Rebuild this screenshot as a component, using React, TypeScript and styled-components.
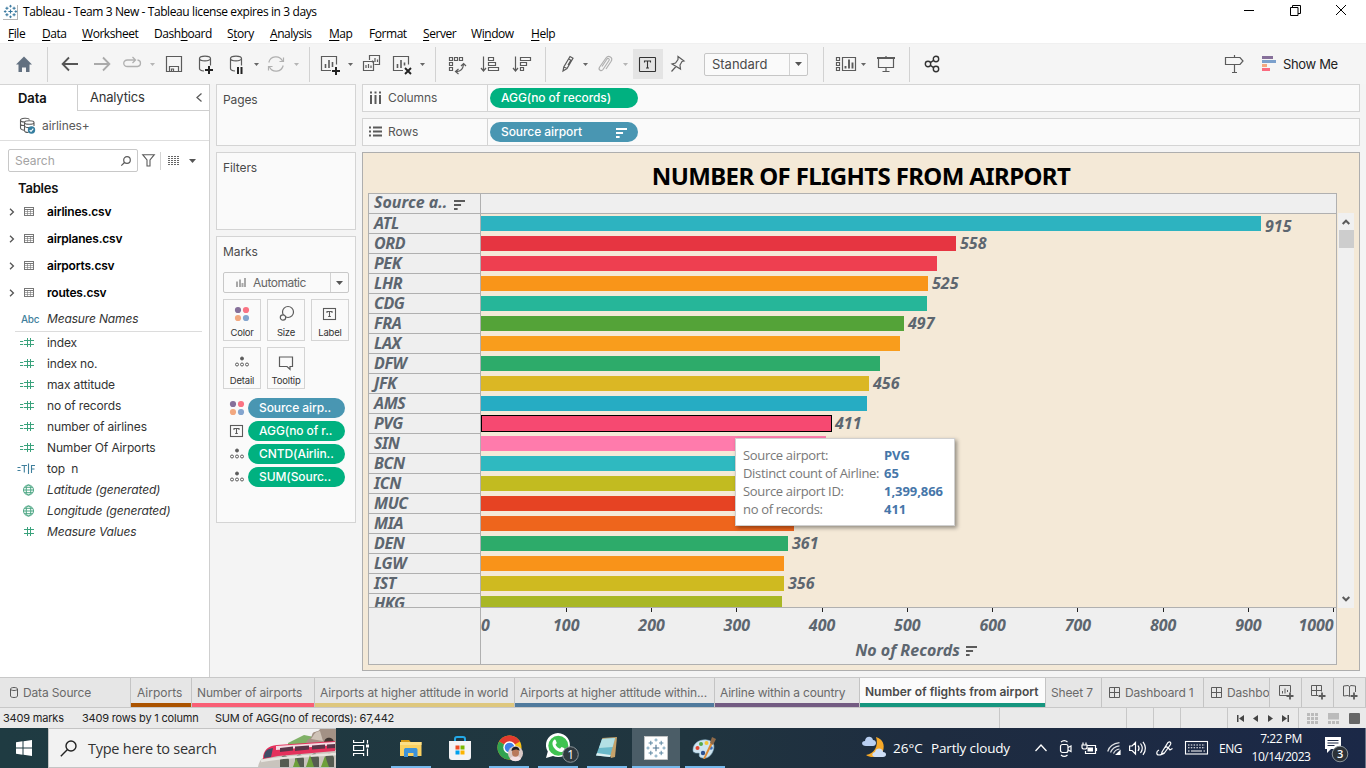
import React from "react";
import styled, { createGlobalStyle, css } from "styled-components";

const ui = `Inter, "Open Sans", sans-serif`;
const win = `"Open Sans", "Noto Sans", sans-serif`;
const noto = `"Noto Sans", "Open Sans", sans-serif`;

const GlobalStyle = createGlobalStyle`
  * { box-sizing: border-box; }
  html, body { margin: 0; padding: 0; }
  body { width: 1366px; height: 768px; overflow: hidden; font-family: ${ui}; }
  svg { display: block; flex: none; overflow: visible; }
`;

const Screen = styled.div`
  width: 1366px;
  height: 768px;
  display: flex;
  flex-direction: column;
  background: #f4f4f4;
  overflow: hidden;
  white-space: pre;
`;

/* ---------- title bar and menu ---------- */
const TitleBar = styled.header`
  height: 24px;
  flex: none;
  background: #fff;
  display: flex;
  align-items: center;
  padding: 0 2px 0 3px;
  font: 12px/24px ${win};
  color: #000;
`;
const AppIcon = styled.span`
  width: 15px;
  height: 15px;
  margin-right: 5px;
  display: grid;
  place-items: center;
  border-right: 1px solid #b5b5b5;
  border-bottom: 1px solid #b5b5b5;
`;
const WindowTitle = styled.span`
  letter-spacing: -0.4px;
  flex: 1;
`;
const WindowButton = styled.span`
  width: 46px;
  height: 20px;
  margin-bottom: 4px;
  display: grid;
  place-items: center;
`;
const MenuBar = styled.nav`
  height: 19px;
  flex: none;
  background: #fff;
  display: flex;
  font: 12px/20px ${win};
  color: #000;
`;
const MenuItem = styled.span<{ $w: number }>`
  width: ${(p) => p.$w}px;
  letter-spacing: -0.45px;
  u { text-underline-offset: 2px; }
`;

/* ---------- toolbar ---------- */
const ToolBar = styled.div`
  height: 41px;
  flex: none;
  background: #f5f5f5;
  border-top: 1px solid #f0f0f0;
  display: flex;
  align-items: center;
`;
const Tool = styled.span<{ $ml: number }>`
  margin-left: ${(p) => p.$ml}px;
  flex: none;
`;
const ToolDivider = styled.span<{ $ml: number }>`
  width: 1px;
  height: 35px;
  background: #d2d2d2;
  margin-left: ${(p) => p.$ml}px;
  flex: none;
`;
const LabelToggle = styled.span`
  width: 30px;
  height: 30px;
  margin-left: 4px;
  padding-right: 1px;
  background: #e4e4e4;
  display: grid;
  place-items: center;
`;
const FitSelect = styled.span`
  width: 104px;
  height: 23px;
  margin-left: 17px;
  border: 1px solid #c6c6c6;
  border-radius: 2px;
  background: #fafafa;
  display: flex;
  align-items: center;
  font-size: 13px;
  color: #4a4a4a;
  padding-left: 7px;
  letter-spacing: -0.02px;
`;
const SelectArrow = styled.span<{ $w: number }>`
  width: ${(p) => p.$w}px;
  height: 100%;
  margin-left: auto;
  border-left: 1px solid #d2d2d2;
  display: grid;
  place-items: center;
`;
const ShowMe = styled.span`
  margin-left: 17px;
  display: flex;
  align-items: center;
  gap: 6px;
  width: 103px;
  font-size: 13px;
  letter-spacing: -0.35px;
  line-height: 18px;
  padding-bottom: 1px;
  color: #222;
`;

/* ---------- workspace ---------- */
const Workspace = styled.main`
  height: 593px;
  flex: none;
  display: flex;
`;
const DataPane = styled.aside`
  width: 210px;
  flex: none;
  background: #fff;
  border-right: 1px solid #cfcfcf;
  display: flex;
  flex-direction: column;
`;
const PaneTabs = styled.div`
  height: 27px;
  display: flex;
  flex: none;
  border-top: 1px solid #d4d4d4;
`;
const PaneTab = styled.span<{ $active?: boolean }>`
  display: flex;
  align-items: center;
  font-size: 13px;
  color: #111;
  ${(p) =>
    p.$active
      ? css`
          width: 77px;
          padding: 0 0 1px 18px;
          font-weight: 600;
          letter-spacing: -0.1px;
        `
      : css`
          flex: 1;
          padding: 0 7px 1px 12px;
          justify-content: space-between;
          border-left: 1px solid #cfcfcf;
          border-bottom: 1px solid #cfcfcf;
          letter-spacing: -0.2px;
          color: #333;
        `}
`;
const SourceRow = styled.div`
  height: 30px;
  flex: none;
  border-bottom: 1px solid #dedede;
  display: flex;
  align-items: center;
  padding: 0 0 1px 19px;
  gap: 6px;
  font-size: 12px;
  letter-spacing: -0.1px;
  color: #5a5a5a;
`;
const SearchRow = styled.div`
  height: 23px;
  flex: none;
  margin: 8px 0 5px 8px;
  display: flex;
  align-items: center;
`;
const SearchField = styled.span`
  width: 130px;
  height: 23px;
  border: 1px solid #c8c8c8;
  border-radius: 2px;
  display: flex;
  align-items: center;
  justify-content: space-between;
  padding: 0 6px;
  font-size: 12px;
  color: #a3a3a3;
`;
const ViewSplit = styled.span`
  width: 1px;
  height: 18px;
  background: #d4d4d4;
  margin: 0 7px 0 5px;
`;
const TablesHeading = styled.div`
  height: 21px;
  line-height: 22px;
  padding-left: 18px;
  font-size: 13px;
  font-weight: 600;
  letter-spacing: -0.2px;
  color: #111;
`;
const TableRow = styled.div`
  height: 27px;
  display: flex;
  align-items: center;
  padding-left: 9px;
  font-size: 12px;
  font-weight: 600;
  letter-spacing: -0.2px;
  color: #000;
  svg:nth-child(2) { margin: 0 13px 0 9px; }
`;
const FieldRow = styled.div<{ $names?: boolean; $italic?: boolean }>`
  height: ${(p) => (p.$names ? 26 : 21)}px;
  margin: 0 7px 0 15px;
  border-bottom: ${(p) => (p.$names ? "1px solid #dcdcdc" : "0")};
  display: flex;
  align-items: center;
  font-size: 12px;
  color: #333;
  font-style: ${(p) => (p.$italic ? "italic" : "normal")};
`;
const FieldIcon = styled.span<{ $abc?: boolean }>`
  width: 32px;
  display: flex;
  padding-left: ${(p) => (p.$abc ? 6 : 0)}px;
  font: 500 10px ${ui};
  letter-spacing: -0.3px;
  color: #3f7f9c;
`;
const FieldName = styled.span`
  letter-spacing: -0.15px;
`;

/* ---------- cards ---------- */
const Cards = styled.section`
  width: 140px;
  margin-left: 6px;
  flex: none;
  display: flex;
  flex-direction: column;
  gap: 6px;
`;
const Card = styled.div<{ $h: number }>`
  height: ${(p) => p.$h}px;
  border: 1px solid #d4d4d4;
  background: #fafafa;
  padding: 7px 6px 0;
  color: #4a4a4a;
  font-size: 12px;
`;
const CardTitle = styled.div`
  line-height: 16px;
  letter-spacing: -0.1px;
`;
const MarkSelect = styled.div`
  margin-top: 12px;
  width: 126px;
  height: 21px;
  border: 1px solid #c8c8c8;
  border-radius: 2px;
  display: flex;
  align-items: center;
  padding-left: 12px;
  gap: 7px;
  color: #666;
  letter-spacing: -0.5px;
`;
const MarkGrid = styled.div`
  margin-top: 6px;
  display: grid;
  grid-template-columns: repeat(3, 38px);
  grid-auto-rows: 42px;
  gap: 6px;
`;
const MarkButton = styled.div`
  border: 1px solid #d4d4d4;
  display: flex;
  flex-direction: column;
  align-items: center;
  justify-content: space-between;
  padding: 4px 0 0;
  font-size: 9.5px;
  line-height: 14px;
  letter-spacing: -0.2px;
  color: #333;
`;
const PillList = styled.div`
  margin-top: 9px;
  display: flex;
  flex-direction: column;
  gap: 3px;
`;
const PillRow = styled.div`
  display: flex;
  align-items: center;
  padding-left: 6px;
  gap: 3px;
`;
const Pill = styled.span<{ $blue?: boolean; $w: number }>`
  width: ${(p) => p.$w}px;
  height: 20px;
  border-radius: 10px;
  background: ${(p) => (p.$blue ? "#4996b2" : "#00b180")};
  color: #fff;
  font: 500 12px/20px ${ui};
  letter-spacing: -0.08px;
  padding: 0 11px;
  display: flex;
  align-items: center;
  justify-content: space-between;
`;

/* ---------- shelves ---------- */
const Stage = styled.section`
  width: 998px;
  margin-left: 6px;
  flex: none;
  display: flex;
  flex-direction: column;
  gap: 6px;
`;
const Shelf = styled.div`
  height: 28px;
  flex: none;
  border: 1px solid #d4d4d4;
  background: #fafafa;
  display: flex;
  align-items: center;
`;
const ShelfName = styled.span`
  width: 125px;
  height: 100%;
  border-right: 1px solid #d4d4d4;
  margin-right: 2px;
  padding: 0 0 1px 6px;
  display: flex;
  align-items: center;
  gap: 6px;
  font-size: 12px;
  letter-spacing: -0.1px;
  color: #555;
`;

/* ---------- chart ---------- */
const Viz = styled.div`
  position: relative;
  height: 519px;
  border: 1px solid #aeaeae;
  background: #f4e9d7;
  color: #5d666f;
  font: italic 700 16px ${noto};
`;
const VizTitle = styled.h1`
  margin: 0;
  height: 40px;
  padding-top: 7px;
  text-align: center;
  font: 700 24px/32px ${noto};
  letter-spacing: -0.62px;
  color: #000;
`;
const VizBody = styled.div`
  display: flex;
  padding-left: 5px;
`;
const Table = styled.div`
  width: 969px;
  height: 472px;
  border: 1px solid #b0b0b0;
`;
const Header = styled.div`
  height: 20px;
  background: #efefef;
  border-bottom: 1px solid #b0b0b0;
  display: flex;
`;
const HeaderCell = styled.span`
  width: 112px;
  border-right: 1px solid #b0b0b0;
  padding-left: 5px;
  display: flex;
  align-items: center;
  gap: 7px;
  line-height: 17px;
  padding-bottom: 2px;
  svg { margin-top: 3px; }
`;
const Rows = styled.div`
  height: 393px;
  overflow: hidden;
`;
const Row = styled.div`
  height: 20px;
  display: flex;
`;
const RowLabel = styled.span`
  width: 112px;
  height: 20px;
  padding-left: 5px;
  background: #efefef;
  border-right: 1px solid #b0b0b0;
  border-bottom: 1px solid #b0b0b0;
  line-height: 18px;
  letter-spacing: -0.4px;
`;
const Bar = styled.span<{ $w: number; $c: string; $on?: boolean }>`
  width: ${(p) => p.$w}px;
  height: ${(p) => (p.$on ? 17 : 15)}px;
  margin-top: ${(p) => (p.$on ? 1 : 2)}px;
  background: ${(p) => p.$c};
  border: ${(p) => (p.$on ? "1px solid #000" : "0")};
`;
const BarValue = styled.span<{ $drop?: boolean; $near?: boolean }>`
  padding: ${(p) => (p.$drop ? "3px" : "0")} 0 0 ${(p) => (p.$near ? 3 : 4)}px;
  line-height: 18px;
`;
const Axis = styled.div`
  height: 57px;
  border-top: 1px solid #b0b0b0;
  background: #efefef;
  display: flex;
`;
const AxisStub = styled.span`
  width: 112px;
  border-right: 1px solid #b0b0b0;
`;
const AxisArea = styled.div`
  flex: 1;
`;
const Scale = styled.div`
  height: 29px;
  display: grid;
  grid-template-columns: repeat(10, 85.27px) 0;
`;
const Tick = styled.div<{ $at: "start" | "mid" | "end" }>`
  width: 0;
  display: flex;
  flex-direction: column;
  align-items: ${(p) => ({ start: "flex-start", mid: "center", end: "flex-end" })[p.$at]};
  line-height: 26px;
  i {
    width: 1px;
    height: 4px;
    flex: none;
    background: ${(p) => (p.$at === "start" ? "transparent" : "#222")};
  }
`;
const AxisTitle = styled.div`
  display: flex;
  justify-content: center;
  align-items: center;
  gap: 6px;
  padding-left: 15px;
  line-height: 26px;
`;
const ScrollTrack = styled.div`
  width: 16px;
  height: 395px;
  margin: 20px 0 0 1px;
  background: #f0f0f0;
  display: flex;
  flex-direction: column;
  align-items: center;
  padding: 6px 0 6px;
`;
const ScrollThumb = styled.div`
  width: 15px;
  height: 18px;
  margin: 5px 0 auto;
  background: #cdcdcd;
`;
const Tooltip = styled.div`
  position: absolute;
  left: 372px;
  top: 285px;
  width: 220px;
  height: 88px;
  padding: 7px;
  background: #fff;
  border: 1px solid #d0d0d0;
  box-shadow: 2px 2px 4px rgba(0, 0, 0, 0.4);
  font: 400 13px/18px ${win};
  color: #787878;
  display: grid;
  grid-template-columns: 141px 1fr;
  grid-auto-rows: 18px;
  letter-spacing: -0.33px;
  b { color: #4676a9; letter-spacing: -0.05px; }
`;

/* ---------- sheet tabs and status ---------- */
const SheetTabs = styled.div`
  height: 31px;
  flex: none;
  border-top: 1px solid #c8c8c8;
  border-bottom: 1px solid #c8c8c8;
  background: #e6e6e6;
  display: flex;
`;
const SheetTab = styled.span<{ $w: number; $c?: string; $active?: boolean; $pad?: number; $ls?: number }>`
  width: ${(p) => p.$w}px;
  flex: none;
  overflow: hidden;
  padding-left: ${(p) => p.$pad ?? 6}px;
  padding-bottom: ${(p) => (p.$active ? 2 : 0)}px;
  border-right: 1px solid #c4c4c4;
  box-shadow: ${(p) => (p.$c ? `inset 0 -4px 0 ${p.$c}` : "none")};
  background: ${(p) => (p.$active ? "#fbfbfb" : "#e6e6e6")};
  color: ${(p) => (p.$active ? "#4a4a4a" : "#6a6a6a")};
  font-size: 12px;
  font-weight: ${(p) => (p.$active ? 600 : 400)};
  letter-spacing: ${(p) => p.$ls ?? -0.14}px;
  display: flex;
  align-items: center;
  gap: 5px;
`;
const StatusBar = styled.div`
  height: 20px;
  flex: none;
  background: #eaeaea;
  display: flex;
  font-size: 11px;
  line-height: 20px;
  letter-spacing: -0.19px;
  color: #222;
`;
const StatusText = styled.span<{ $w: number }>`
  width: ${(p) => p.$w}px;
`;
const StatusCell = styled.span<{ $w: number }>`
  width: ${(p) => p.$w}px;
  border-left: 1px solid #c8c8c8;
  display: flex;
  align-items: center;
  justify-content: space-evenly;
`;
const ViewModes = styled(StatusCell)`
  justify-content: space-between;
  padding: 0 5px 0 8px;
`;

/* ---------- taskbar ---------- */
const TaskBar = styled.footer`
  height: 40px;
  flex: none;
  display: flex;
  color: #fff;
  font-family: ${win};
  background: linear-gradient(90deg, #1f3b42 0%, #20353f 50%, #1e2c40 68%, #1b2847 100%);
`;
const StartButton = styled.span`
  width: 48px;
  display: grid;
  place-items: center;
`;
const TaskSearch = styled.div`
  width: 288px;
  background: #f2f2f2;
  border: 1px solid #c4c4c4;
  border-right: 0;
  display: flex;
  align-items: center;
  padding-left: 11px;
  color: #333;
  font-size: 14.5px;
  letter-spacing: -0.25px;
  span { margin-left: 11px; flex: 1; }
`;
const TaskSlot = styled.span<{ $w?: number; $open?: boolean; $active?: boolean; $shift?: number }>`
  width: ${(p) => p.$w ?? 49}px;
  flex: none;
  display: flex;
  align-items: center;
  justify-content: center;
  padding-left: ${(p) => p.$shift ?? 0}px;
  background: ${(p) => (p.$active ? "#4b5d67" : "transparent")};
  ${(p) =>
    p.$open &&
    css`
      background: linear-gradient(#76b9ed, #76b9ed) center bottom / 40px 2px no-repeat;
    `}
  ${(p) =>
    p.$active &&
    css`
      box-shadow: inset 0 -2px 0 #76b9ed;
    `}
`;
const Tray = styled.div`
  margin-left: auto;
  width: 506px;
  display: flex;
  align-items: center;
  font-size: 13.5px;
`;
const TraySlot = styled.span<{ $w: number; $left?: boolean }>`
  width: ${(p) => p.$w}px;
  flex: none;
  display: flex;
  justify-content: ${(p) => (p.$left ? "flex-start" : "center")};
  padding-left: ${(p) => (p.$left ? 5 : 0)}px;
`;
const Forecast = styled.span`
  width: 98px;
  flex: none;
  letter-spacing: -0.15px;
`;
const Lang = styled(TraySlot)`
  font-size: 12px;
  letter-spacing: -0.5px;
`;
const Clock = styled.span`
  width: 64px;
  text-align: center;
  font-size: 12px;
  line-height: 18px;
  letter-spacing: -0.48px;
`;
const DesktopEdge = styled.span`
  width: 1px;
  height: 40px;
  margin-left: 8px;
  background: #6c7589;
`;

/* ---------- icons ---------- */
type IconProps = { w?: number; h?: number; c?: string; sw?: number; fill?: string; children?: React.ReactNode };
const Icon = ({ w = 20, h = 20, c = "#5b5b5b", sw = 1.2, fill = "none", children }: IconProps) => (
  <svg width={w} height={h} viewBox={`0 0 ${w} ${h}`} fill={fill} stroke={c} strokeWidth={sw}>
    {children}
  </svg>
);
const Caret = ({ c = "#555" }: { c?: string }) => (
  <svg width="7" height="4" viewBox="0 0 7 4">
    <path d="M0 0H7L3.5 4Z" fill={c} />
  </svg>
);
const SmallCaret = ({ c = "#666" }: { c?: string }) => (
  <svg width="7" height="3" viewBox="0 0 7 3">
    <path d="M1 0H6L3.5 3Z" fill={c} />
  </svg>
);
const cross = (x: number, y: number, r: number) => `M${x - r} ${y}H${x + r}M${x} ${y - r}V${y + r}`;
const TableauMark = ({ s }: { s: number }) => (
  <svg width={s} height={s} viewBox="0 0 20 20" fill="none" stroke="#34759c">
    <path d={cross(10, 10, 3.2)} strokeWidth="1.8" />
    <path d={cross(4.5, 5, 2.4) + cross(15.5, 5, 2.4) + cross(4.5, 15, 2.4) + cross(15.5, 15, 2.4)} strokeWidth="1.6" />
    <path d={cross(10, 1.8, 2) + cross(10, 18.2, 2) + cross(1.8, 10, 2) + cross(18.2, 10, 2)} strokeWidth="1.4" />
  </svg>
);
const SortGlyph = ({ c = "#fff", w = 11 }: { c?: string; w?: number }) => (
  <Icon w={w} h={11} c={c} sw={2}>
    <path d={`M0 2H${w}M0 6H${w * 0.64}M0 10H${w * 0.33}`} />
  </Icon>
);
const Cylinder = ({ x }: { x: number }) => (
  <path d={`M${x} 4.5v10c0 1.4 2 2.3 4.5 2.5M${x + 11} 4.5v7M${x} 4.5c0-3.2 11-3.2 11 0s-11 3.2-11 0`} />
);
const TextBox = ({ c = "#5b5b5b", w = 14, h = 12 }: { c?: string; w?: number; h?: number }) => (
  <Icon w={w} h={h} c={c} sw={1.1}>
    <rect x=".5" y=".5" width={w - 1} height={h - 1} rx=".5" />
    <path d={`M${w / 2 - 3} 5.5V4h6v1.5M${w / 2} 4v${h - 8}m-1.5 0h3`} />
  </Icon>
);
const ColorDots = ({ h = 16 }: { h?: number }) => (
  <svg width="16" height={h} viewBox={`0 ${(16 - h) / 2} 16 ${h}`}>
    <circle cx="4" cy="4" r="3.1" fill="#86709a" />
    <circle cx="12" cy="4" r="3.1" fill="#fa7383" />
    <circle cx="4" cy="12" r="3.1" fill="#f2a880" />
    <circle cx="12" cy="12" r="3.1" fill="#84a5ce" />
  </svg>
);
const DetailDots = ({ h = 12 }: { h?: number }) => (
  <svg width="16" height={h} viewBox={`-1 ${(12 - h) / 2} 16 ${h}`} fill="none" stroke="#5b5b5b">
    <circle cx="7" cy="2.5" r="1.5" fill="#5b5b5b" />
    <circle cx="2" cy="8.500" r="1.5" />
    <circle cx="7" cy="8.500" r="1.5" />
    <circle cx="12" cy="8.500" r="1.5" />
  </svg>
);
const LabelGlyph = ({ h = 14 }: { h?: number }) => (
  <svg width="16" height={h} viewBox={`-1 ${(12 - h) / 2} 16 ${h}`} fill="none" stroke="#5b5b5b" strokeWidth="1.1">
    <rect x=".5" y=".5" width="12" height="11" />
    <path d="M4 5V3.500h5V5M6.500 3.500v5m-1.300 0h2.600" />
  </svg>
);
const SheetGrid = () => (
  <Icon w={11} h={11} sw={1}>
    <path d="M.5.5h10v10H.5zM5.5.5v10M.5 5.5h10" />
  </Icon>
);
const Globe = () => (
  <Icon w={18} h={12} c="#4ba683" sw={1}>
    <circle cx="13.5" cy="6" r="5" />
    <ellipse cx="13.5" cy="6" rx="2.3" ry="5" />
    <path d="M8.5 6h10M9.3 3.3h8.4M9.3 8.7h8.4" />
  </Icon>
);
const ChevronRight = () => (
  <Icon w={6} h={8} sw={1.3} c="#555">
    <path d="M1 .8 4.4 4 1 7.2" />
  </Icon>
);
const GridTable = () => (
  <Icon w={10} h={9} sw={1} c="#777">
    <rect x=".5" y=".5" width="9" height="8" />
    <path d="M.5 2.500h9" />
    <path d="M.5 4.500h9M.5 6.500h9M3.500 2.500v6M6.500 2.500v6" opacity=".6" />
  </Icon>
);

const tools: Array<{ ml: number; el: React.ReactNode; div?: boolean }> = [
  { ml: 14, el: <Icon c="none" fill="#627080"><path d="M10 2.5 2 10.5h2.5V18H8v-4.5h4V18h3.5v-7.5H18z" /></Icon> },
  { ml: 13, div: true, el: null },
  { ml: 12, el: <Icon c="#555" sw={1.8}><path d="M18 10H3M9 3.5 2.6 10 9 16.5" /></Icon> },
  { ml: 12, el: <Icon c="#aaa" sw={1.8}><path d="M2 10h15M11 3.5 17.4 10 11 16.5" /></Icon> },
  { ml: 10, el: <Icon c="#b0b0b0" sw={1.3}><path d="M12 12.500H5.5C.5 12.500.5 6 5.5 6H13M10.5 3 13.500 6l-3 3M15.500 6c4 .5 4 6 0 6.500H11" /></Icon> },
  { ml: 7, el: <SmallCaret c="#b5b5b5" /> },
  { ml: 8, el: <Icon><path d="M2.5 2.500h15v15h-15zM5.500 17.500v-5h9v5M7.500 17.500v-2.500h2v2.500" /></Icon> },
  { ml: 12, el: <Icon><Cylinder x={3.5} /><path d="M9 16h8M13 12v8" stroke="#222" strokeWidth="2" /></Icon> },
  { ml: 10, el: <Icon><Cylinder x={4.5} /><path d="M12 13v7M15.500 13v7" stroke="#222" strokeWidth="2" /></Icon> },
  { ml: 7, el: <SmallCaret /> },
  { ml: 6, el: <Icon c="#b0b0b0"><path d="M2.800 8.500A7.300 7.300 0 0 1 16.500 7M17.200 11.500A7.300 7.300 0 0 1 3.500 13M17.500 3.500V7.500h-4M2.500 16.500v-4h4" /></Icon> },
  { ml: 7, el: <SmallCaret c="#b5b5b5" /> },
  { ml: 9, div: true, el: null },
  { ml: 10, el: <Icon><path d="M11 16.500H1.500v-14h15v8" /><path d="M5.500 14v-4M9 14V6M12.500 13V8" strokeWidth="1.600" /><path d="M12 17h8M16 13v8" stroke="#222" strokeWidth="2" /></Icon> },
  { ml: 7, el: <SmallCaret /> },
  { ml: 8, el: <Icon><path d="M7.500 6V1.500h10v9h-5M1.500 7.500h10v9h-10zM10.500 8.500v-2M13 8V4M15.500 8V5.500M4 14v-3M6.500 14v-4M9 14v-2.500" /></Icon> },
  { ml: 11, el: <Icon><path d="M10 16.500H.5v-14h15v8" /><path d="M4.500 14v-4M8 14V6M11.500 11.500V8.500" strokeWidth="1.600" /><path d="m12 14 6 6m0-6-6 6" stroke="#222" strokeWidth="1.900" /></Icon> },
  { ml: 6, el: <SmallCaret /> },
  { ml: 9, div: true, el: null },
  { ml: 11, el: <Icon><path d="M2.500 3.500h3v3h-3zM7.500 3.500h3v3h-3zM12.500 3.500h3v3h-3zM2.500 8.500h3v3h-3zM2.500 13.500h3v3h-3zM9 17.500c4.500.3 7-2.500 7.500-7M14 12l2.600-2.500L19 12M11.500 15 8.500 17.500l3 2.500" /></Icon> },
  { ml: 13, el: <Icon><path d="M3.500 2.500v14M1 14l2.500 3L6 14M8.500 3.500h5v3h-5zM8.500 8.500h7v3h-7zM8.500 13.500h10v3h-10z" /></Icon> },
  { ml: 12, el: <Icon><path d="M3.500 2.500v14M1 14l2.500 3L6 14M8.500 3.500h10v3h-10zM8.500 8.500h6v3h-6zM8.500 13.500h3v3h-3z" /></Icon> },
  { ml: 13, div: true, el: null },
  { ml: 12, el: <Icon><path d="m5 17 .8-4L12 2.500l3 1.700L9 14.500zM5.800 13l3.200 1.500M10.800 5l3 1.700M10 11l3-5" /></Icon> },
  { ml: 4, el: <SmallCaret /> },
  { ml: 6, el: <Icon c="#b0b0b0"><path d="m7 12.500 5-7.500c1-1.500 3 0 2 1.500L8 15.500c-1.700 2.300-5 .3-3.500-2.300L11 4c2.500-3.500 7.500-.5 5 3.500L11 15" /></Icon> },
  { ml: 7, el: <SmallCaret c="#b5b5b5" /> },
];

const tableNames = ["airlines.csv", "airplanes.csv", "airports.csv", "routes.csv"];
const fields: Array<[string, "num" | "tf" | "geo" | "plain"]> = [
  ["index", "num"],
  ["index no.", "num"],
  ["max attitude", "num"],
  ["no of records", "num"],
  ["number of airlines", "num"],
  ["Number Of Airports", "num"],
  ["top  n", "tf"],
  ["Latitude (generated)", "geo"],
  ["Longitude (generated)", "geo"],
  ["Measure Values", "plain"],
];
const bars: Array<[string, number, string, string?]> = [
  ["ATL", 780, "#2db3c0", "915"],
  ["ORD", 475, "#e63541", "558"],
  ["PEK", 456, "#ee3f50"],
  ["LHR", 447, "#f99519", "525"],
  ["CDG", 446, "#26b699"],
  ["FRA", 423, "#54a338", "497"],
  ["LAX", 419, "#f99d1c"],
  ["DFW", 399, "#2dab6a"],
  ["JFK", 388, "#dbb724", "456"],
  ["AMS", 386, "#26acc3"],
  ["PVG", 351, "#f64971", "411"],
  ["SIN", 345, "#ff7bac"],
  ["BCN", 330, "#2fb9c0"],
  ["ICN", 324, "#c2bb20"],
  ["MUC", 318, "#e64323"],
  ["MIA", 313, "#ee651c"],
  ["DEN", 307, "#2dab6a", "361"],
  ["LGW", 303, "#f99319"],
  ["IST", 303, "#cfba20", "356"],
  ["HKG", 301, "#a9b725"],
];
const fieldGlyph = {
  num: <Icon w={20} h={11} c="#3aa27c" sw={1}><path d="M5 4.500h3.200M5 7.500h3.200M9 3.500h10M9 7.500h10M12.500 1v9M15.500 1v9" /></Icon>,
  tf: <Icon w={20} h={11} c="#3f7f9c" sw={1.100}><path d="M2.500 4.500h3M2.500 7.500h3M6.500 2.500h5.500M9.300 2.500v7M13.500.5v10.500M16.500 10V2.500h3.500M16.500 6h3" /></Icon>,
  geo: <Globe />,
  plain: <Icon w={20} h={11} c="#3aa27c" sw={1}><path d="M9 3.500h10M9 7.500h10M12.500 1v9M15.500 1v9" /></Icon>,
};

const Monorail = () => (
  <svg width="78" height="38" viewBox="0 0 78 38" style={{ overflow: "hidden" }}>
    <path d="M30 14 46 6l10 2 2 8H30z" fill="#80b167" />
    <path d="M48 14c2-6 5-3 6-8s6-2 8-6h16v38H50z" fill="#a39185" />
    <path d="M53 10c4-5 3-7 9-8l3 10z" fill="#cfc3b7" />
    <path d="M66 14c0-7 10-7 10 0v6H66z" fill="#3f3531" />
    <path d="M0 38c2-12 12-14 30-14l48-3v17z" fill="#c9c4bd" />
    <path d="M22 38V31c1-6 8-6 9 0v7M37 38V30c1-6 8-6 9 0v8M52 38v-9c1-6 8-6 9 0v9M67 38v-9c1-6 8-6 9 0v9" fill="#555c51" />
    <path d="M5 30c0-9 5-13 14-14l58-4v10L20 27z" fill="#e4315c" />
    <path d="M18 17 77 13v3L18 21z" fill="#f4dbe3" />
    <path d="M22 19l13-1.500v4L22 23zM37 17.500l14-1v4L37 22zM54 16.500l13-1v4l-13 1zM69 15.500l8-.5v4l-8 .5z" fill="#5b3549" />
    <path d="M6 29c0-7 3-9 9-10l-2 9z" fill="#3f4e67" />
    <path d="M3 32c18-4 44-5 75-7" stroke="#e8e5e0" strokeWidth="2.500" fill="none" />
    <path d="m35 38 3-9 4 9zM48 38l4-12 4 12zM63 38l4-11 4 11z" fill="#6da03a" />
  </svg>
);

export default function App() {
  return (
    <Screen>
      <GlobalStyle />
      <TitleBar>
        <AppIcon><TableauMark s={13} /></AppIcon>
        <WindowTitle>Tableau - Team 3 New - Tableau license expires in 3 days</WindowTitle>
        <WindowButton><Icon w={10} h={10} c="#000" sw={1}><path d="M0 5.500h10" /></Icon></WindowButton>
        <WindowButton><Icon w={11} h={11} c="#000" sw={1}><path d="M.5 2.500h7.500v8H.5zM2.500 2.500V.5h8v8H8" /></Icon></WindowButton>
        <WindowButton><Icon w={10} h={10} c="#000" sw={1}><path d="m0 0 10 10M10 0 0 10" /></Icon></WindowButton>
      </TitleBar>
      <MenuBar>
        <MenuItem $w={8} />
        <MenuItem $w={34}><u>F</u>ile</MenuItem>
        <MenuItem $w={40}><u>D</u>ata</MenuItem>
        <MenuItem $w={72}><u>W</u>orksheet</MenuItem>
        <MenuItem $w={73}>Dash<u>b</u>oard</MenuItem>
        <MenuItem $w={43}>S<u>t</u>ory</MenuItem>
        <MenuItem $w={59}><u>A</u>nalysis</MenuItem>
        <MenuItem $w={40}><u>M</u>ap</MenuItem>
        <MenuItem $w={54}>F<u>o</u>rmat</MenuItem>
        <MenuItem $w={48}><u>S</u>erver</MenuItem>
        <MenuItem $w={60}>Wi<u>n</u>dow</MenuItem>
        <MenuItem $w={40}><u>H</u>elp</MenuItem>
      </MenuBar>
      <ToolBar>
        {tools.map((t, i) => (t.div ? <ToolDivider key={i} $ml={t.ml} /> : <Tool key={i} $ml={t.ml}>{t.el}</Tool>))}
        <LabelToggle><TextBox w={17} h={15} c="#333" /></LabelToggle>
        <Tool $ml={4}><Icon><path d="m11 2.500 6 4.500-2 .5-2 3.500.5 4L5 10l3.500-1L11 5.500zM9 12.500 4.500 17.500" /></Icon></Tool>
        <FitSelect>Standard<SelectArrow $w={18}><Caret /></SelectArrow></FitSelect>
        <ToolDivider $ml={15} />
        <Tool $ml={12}><Icon><path d="M.5 3.500h3v3h-3zM.5 8.500h3v3h-3zM.5 13.500h3v3h-3zM6.500 3.500h13v13h-13z" /><path d="M9.500 14.500V12M13 14.500v-9M16.500 14.500v-6" strokeWidth="1.900" /></Icon></Tool>
        <Tool $ml={4}><SmallCaret /></Tool>
        <Tool $ml={9}><Icon><path d="M2.500 4v9.500h15V4M10 2v2M10 13.500v4M6.500 17.500h7" /><path d="M1 4h18" strokeWidth="2" /></Icon></Tool>
        <ToolDivider $ml={13} />
        <Tool $ml={12}><Icon c="#333" sw={1.400}><circle cx="6" cy="10" r="2.700" /><circle cx="14" cy="5" r="2.700" /><circle cx="14" cy="15" r="2.700" /><path d="m8.300 8.600 3.400-2.200M8.300 11.400l3.400 2.200" /></Icon></Tool>
        <Tool $ml={283}><Icon><path d="M.500 3.500H15l3 3.500-3 3.500H.500zM9.500 1v2.500M9.500 10.500V18.500M7 18.500h5" /></Icon></Tool>
        <ShowMe>
          <svg width="15" height="15" viewBox="0 0 15 15">
            <path d="M0 0h11v3H0z" fill="#86709a" /><path d="M0 4h14v3H0z" fill="#7ba0cc" />
            <path d="M0 8h5v3H0z" fill="#f2a880" /><path d="M0 12h8v3H0z" fill="#fa6b7f" />
          </svg>
          Show Me
        </ShowMe>
      </ToolBar>

      <Workspace>
        <DataPane>
          <PaneTabs>
            <PaneTab $active>Data</PaneTab>
            <PaneTab>Analytics<Icon w={6} h={9} sw={1.300}><path d="M5.500.5 1 4.500l4.500 4" /></Icon></PaneTab>
          </PaneTabs>
          <SourceRow>
            <Icon w={17} h={17} sw={1.100}>
              <path d="M6 13.500C3 13 1.500 12.500 1.500 11V3c0-2 8-2.500 9-.5M1.500 3c0 1.500 2 2 4 2M5.500 5.500v8c0 1.500 2 2 4 2M5.500 5.500c0-2.300 9.500-2.300 9.500 0s-9.500 2.300-9.500 0M15 5.500V9M1.500 7c0 1 1.500 1.500 3.500 1.500M6 9.500c1 1.200 3 1.300 5 1" />
              <circle cx="12.500" cy="13" r="3.700" fill="#347d9f" stroke="none" />
              <path d="m10.700 13 1.300 1.400 2.300-2.800" stroke="#fff" />
            </Icon>
            airlines+
          </SourceRow>
          <SearchRow>
            <SearchField>Search<Icon w={10} h={10} sw={1.200}><circle cx="6" cy="4" r="3.300" /><path d="M3.500 6.500.3 9.700" /></Icon></SearchField>
            <Tool $ml={4}><Icon w={13} h={13} sw={1.100}><path d="M.7.7h11.600L8 6v6H5V6z" /></Icon></Tool>
            <ViewSplit />
            <Icon w={12} h={10} sw={1} c="#666"><path d="M0 .5h12M0 2.500h12M0 4.500h12M0 6.500h12M0 8.500h12" strokeDasharray="2 1" /></Icon>
            <Tool $ml={9}><Caret /></Tool>
          </SearchRow>
          <TablesHeading>Tables</TablesHeading>
          {tableNames.map((n) => (
            <TableRow key={n}><ChevronRight /><GridTable />{n}</TableRow>
          ))}
          <FieldRow $names $italic><FieldIcon $abc>Abc</FieldIcon><FieldName>Measure Names</FieldName></FieldRow>
          {fields.map(([n, k]) => (
            <FieldRow key={n} $italic={k === "geo" || k === "plain"}>
              <FieldIcon>{fieldGlyph[k]}</FieldIcon>
              <FieldName>{n}</FieldName>
            </FieldRow>
          ))}
        </DataPane>

        <Cards>
          <Card $h={62}><CardTitle>Pages</CardTitle></Card>
          <Card $h={78}><CardTitle>Filters</CardTitle></Card>
          <Card $h={287}>
            <CardTitle>Marks</CardTitle>
            <MarkSelect>
              <Icon w={10} h={9} c="#a8a8a8" sw={2}><path d="M1 9V3.500M4 9V1.500M6.500 9V5M9 9V0" /></Icon>
              Automatic
              <SelectArrow $w={18}><Caret /></SelectArrow>
            </MarkSelect>
            <MarkGrid>
              <MarkButton><ColorDots h={20} />Color</MarkButton>
              <MarkButton><Icon w={15} h={20}><circle cx="9" cy="8" r="5.500" /><circle cx="4" cy="13.500" r="2.700" fill="#fafafa" /></Icon>Size</MarkButton>
              <MarkButton><LabelGlyph h={20} />Label</MarkButton>
              <MarkButton><DetailDots h={20} />Detail</MarkButton>
              <MarkButton><Icon w={14} h={20}><path d="M.5 5h13v9.500h-2.500v2.800L8 14.500H.5z" /></Icon>Tooltip</MarkButton>
            </MarkGrid>
            <PillList>
              <PillRow><ColorDots /><Pill $blue $w={97}>Source airp..</Pill></PillRow>
              <PillRow><LabelGlyph /><Pill $w={97}>AGG(no of r..</Pill></PillRow>
              <PillRow><DetailDots /><Pill $w={97}>CNTD(Airlin..</Pill></PillRow>
              <PillRow><DetailDots /><Pill $w={97}>SUM(Sourc..</Pill></PillRow>
            </PillList>
          </Card>
        </Cards>

        <Stage>
          <Shelf>
            <ShelfName>
              <Icon w={13} h={13} sw={2}><path d="M2 4v9M6.500 4v9M11 4v9M2 .5v2M6.500.5v2M11 .5v2" /></Icon>
              Columns
            </ShelfName>
            <Pill $w={148}>AGG(no of records)</Pill>
          </Shelf>
          <Shelf>
            <ShelfName>
              <Icon w={13} h={13} sw={1.800}><path d="M0 2.500h2M4 2.500h9M0 6.500h2M4 6.500h9M0 10.500h2M4 10.500h9" /></Icon>
              Rows
            </ShelfName>
            <Pill $blue $w={148}>Source airport<SortGlyph /></Pill>
          </Shelf>
          <Viz>
            <VizTitle>NUMBER OF FLIGHTS FROM AIRPORT</VizTitle>
            <VizBody>
              <Table>
                <Header><HeaderCell>Source a..<SortGlyph c="#5b5b5b" /></HeaderCell></Header>
                <Rows>
                  {bars.map(([code, w, c, v]) => (
                    <Row key={code}>
                      <RowLabel>{code}</RowLabel>
                      <Bar $w={w} $c={c} $on={code === "PVG"} />
                      {v && <BarValue $drop={code === "ATL"} $near={code === "PVG"}>{v}</BarValue>}
                    </Row>
                  ))}
                </Rows>
                <Axis>
                  <AxisStub />
                  <AxisArea>
                    <Scale>
                      {Array.from({ length: 11 }, (_, i) => (
                        <Tick key={i} $at={i === 0 ? "start" : i === 10 ? "end" : "mid"}><i />{i * 100}</Tick>
                      ))}
                    </Scale>
                    <AxisTitle>No of Records<SortGlyph c="#5b5b5b" /></AxisTitle>
                  </AxisArea>
                </Axis>
              </Table>
              <ScrollTrack>
                <Icon w={8} h={6} sw={2}><path d="M.7 5 4 1.700 7.300 5" /></Icon>
                <ScrollThumb />
                <Icon w={8} h={6} sw={2}><path d="M.7 1 4 4.300 7.300 1" /></Icon>
              </ScrollTrack>
            </VizBody>
            <Tooltip>
              <span>Source airport:</span><b>PVG</b>
              <span>Distinct count of Airline:</span><b>65</b>
              <span>Source airport ID:</span><b>1,399,866</b>
              <span>no of records:</span><b>411</b>
            </Tooltip>
          </Viz>
        </Stage>
      </Workspace>

      <SheetTabs>
        <SheetTab $w={131} $pad={10}><Icon w={8} h={11} sw={1}><path d="M.5 2v7c0 2 7 2 7 0V2c0-2-7-2-7 0s7 2 7 0" /></Icon>Data Source</SheetTab>
        <SheetTab $w={61} $c="#ab5300" $ls={0}>Airports</SheetTab>
        <SheetTab $w={123} $c="#f95f75" $pad={5}>Number of airports</SheetTab>
        <SheetTab $w={200} $c="#dec77d" $pad={5}>Airports at higher attitude in world</SheetTab>
        <SheetTab $w={200} $c="#507a9d" $pad={5}>Airports at higher attitude within...</SheetTab>
        <SheetTab $w={145} $c="#735b82" $pad={5} $ls={-0.2}>Airline within a country</SheetTab>
        <SheetTab $w={186} $c="#16967f" $active $pad={5} $ls={0}>Number of flights from airport</SheetTab>
        <SheetTab $w={56} $pad={5}>Sheet 7</SheetTab>
        <SheetTab $w={102} $pad={7}><SheetGrid />Dashboard 1</SheetTab>
        <SheetTab $w={66} $pad={7}><SheetGrid />Dashbo</SheetTab>
        <SheetTab $w={32} $pad={9}><Icon w={15} h={15} sw={1}><path d="M9 10.500H.5v-10h11v7M3.500 8.500V6M6 8.500V3.500M8.500 7V5" /><path d="M7.500 11h7M11 7.500v7" strokeWidth="1.800" /></Icon></SheetTab>
        <SheetTab $w={32} $pad={9}><Icon w={15} h={15} sw={1}><path d="M7 10.500H.5v-10h10v6M5.500.5v10M.5 5.500h10" /><path d="M7.500 11h7M11 7.500v7" strokeWidth="1.800" /></Icon></SheetTab>
        <SheetTab $w={32} $pad={9}><Icon w={15} h={15} sw={1}><path d="M6.500 11.500 5 10.500.5 11V1L5 .5l1.500 1L8 .5l4.500.5v6M6.500 1.500v10" /><path d="M7.500 11h7M11 7.500v7" strokeWidth="1.800" /></Icon></SheetTab>
      </SheetTabs>

      <StatusBar>
        <StatusText $w={3} />
        <StatusText $w={79}>3409 marks</StatusText>
        <StatusText $w={133}>3409 rows by 1 column</StatusText>
        <StatusText $w={784}>SUM of AGG(no of records): 67,442</StatusText>
        <StatusCell $w={127} />
        <StatusCell $w={27} />
        <StatusCell $w={27} />
        <StatusCell $w={47} />
        <StatusCell $w={71}>
          <Icon w={7} h={7} c="none" fill="#444"><path d="M0 0h1.500v7H0zM7 0v7L2 3.500z" /></Icon>
          <Icon w={6} h={7} c="none" fill="#444"><path d="M5 0v7L0 3.500z" /></Icon>
          <Icon w={6} h={7} c="none" fill="#444"><path d="M1 0v7l5-3.500z" /></Icon>
          <Icon w={7} h={7} c="none" fill="#444"><path d="M7 0H5.500v7H7zM0 0v7l5-3.500z" /></Icon>
        </StatusCell>
        <ViewModes $w={67}>
          <Icon w={11} h={11} c="#bbb" sw={3}><path d="M0 1.500h11M0 5.500h11M0 9.500h11" strokeDasharray="3 1" /></Icon>
          <Icon w={11} h={11} c="none" fill="#bbb"><path d="M0 0h11v6.500H0zM0 8h3v3H0zM4 8h3v3H4zM8 8h3v3H8z" /></Icon>
          <Icon w={11} h={11} c="none" fill="#666"><rect width="11" height="11" rx="1" /></Icon>
        </ViewModes>
      </StatusBar>

      <TaskBar>
        <StartButton><Icon w={16} h={16} c="none" fill="#fff"><path d="M0 2.300 6.500 1.300v6.300H0zM7.500 1.200 16 0v7.600H7.500zM0 8.500h6.500v6.300L0 13.800zM7.500 8.500H16V16l-8.500-1.200z" /></Icon></StartButton>
        <TaskSearch>
          <Icon w={17} h={17} c="#222" sw={1.400}><circle cx="11" cy="6" r="5" /><path d="M7.500 9.500.8 16.300" /></Icon>
          <span>Type here to search</span>
          <Monorail />
        </TaskSearch>
        <TaskSlot $w={50}><Icon w={16} h={16} c="#fff" sw={1.200}><path d="M.6 0v2.500h10V0M.6 5.500h10v5H.6zM.6 16v-2.500h10V16M14.500 0v3.500M14.500 8.500V16" /><path d="M14.500 4.500v3" strokeWidth="3" /></Icon></TaskSlot>
        <TaskSlot $open>
          <svg width="22" height="19" viewBox="0 0 22 19"><path d="M1 1h8l2 2.500H1z" fill="#d99b16" /><path d="M0 3h21.500v14H0z" fill="#fbd160" /><path d="M0 3h21.500v3H0z" fill="#fddf86" /><path d="M4 18v-7c0-1.500 1-2 2-2h9.500c1 0 2 .5 2 2v7h-4v-4h-5.500v4z" fill="#3d93d9" /></svg>
        </TaskSlot>
        <TaskSlot>
          <svg width="24" height="24" viewBox="0 0 24 24"><path d="M7 6V3c0-1.500.5-2 2-2h6c1.500 0 2 .5 2 2v3" fill="none" stroke="#23a9e8" strokeWidth="2" /><path d="M1 5h22v16c0 2-1 3-3 3H4c-2 0-3-1-3-3z" fill="#f3f3f5" /><path d="M7.500 9.500h4v4h-4z" fill="#ef4b23" /><path d="M12.500 9.500h4v4h-4z" fill="#7ab800" /><path d="M7.500 14.500h4v4h-4z" fill="#00a1ee" /><path d="M12.500 14.500h4v4h-4z" fill="#fcb400" /></svg>
        </TaskSlot>
        <TaskSlot $open $shift={2}>
          <svg width="26" height="26" viewBox="0 0 26 26"><circle cx="12.500" cy="12.500" r="12" fill="#fbc116" /><path d="M12.500 12.500 2.100 6.500A12 12 0 0 1 22.900 6.500z" fill="#e33b2e" /><path d="M2.100 6.500A12 12 0 0 0 12.500 24.500L17 16l-4.500-3.500z" fill="#31a350" /><circle cx="12.500" cy="12.500" r="6.200" fill="#fff" /><circle cx="12.500" cy="12.500" r="4.800" fill="#3f7fe8" /><circle cx="18.500" cy="18.500" r="7.500" fill="#d9c9c6" /><path d="M13 24c1-4 10-4 11 0-3 3-8 3-11 0" fill="#f1dfe3" /><ellipse cx="18.500" cy="17.500" rx="3.500" ry="4.300" fill="#b8795b" /><path d="M14.500 16c0-6 8.500-5 8 0-2-2-5-2-8 0" fill="#1e1b1d" /></svg>
        </TaskSlot>
        <TaskSlot $open $shift={8}>
          <svg width="32" height="26" viewBox="0 1 32 26"><path d="m0 24 1.800-6.500A12 12 0 1 1 7 22z" fill="#fff" /><circle cx="12.300" cy="11.700" r="10" fill="#3fc351" /><path d="M7.500 6.500c1-1.500 2-1 2.500.5l.8 2-1.300 1.700c1 2 2.500 3.200 4.500 4l1.500-1.700c2 .7 4 1.500 3 3-1.500 3-6 2.500-9-.5s-4-6.500-2-9" fill="#fff" /><circle cx="24.500" cy="20.500" r="7.800" fill="#303a40" stroke="#8b9499" /><text x="21.200" y="25" fill="#fff" fontSize="12" fontFamily="Open Sans, sans-serif">1</text></svg>
        </TaskSlot>
        <TaskSlot $open $w={50}>
          <svg width="24" height="24" viewBox="0 0 24 24"><path d="M7 2 22 1l-2 20-4 1z" fill="#c5a26a" /><path d="M7 3 20 2l-5 19-14-1.500z" fill="#6bb9c9" /><path d="M7 3 20 2l-2.300 9L4 12z" fill="#b4e0e4" /><path d="m1 19.500 14 1.500.5-2L2 17z" fill="#dfeff0" /></svg>
        </TaskSlot>
        <TaskSlot $w={48} $active>
          <svg width="24" height="24" viewBox="-2 -2 24 24"><rect x="-1.500" y="-1.500" width="23" height="23" fill="#fff" stroke="#c9c9c9" strokeWidth=".8" /><path d={cross(10, 10, 3.200)} stroke="#4d7390" strokeWidth="1.100" /><path d={cross(4.800, 5, 2.200) + cross(15.200, 5, 2.200) + cross(4.800, 15, 2.200) + cross(15.200, 15, 2.200)} stroke="#5c87a2" /><path d={cross(10, 2, 1.600) + cross(10, 18, 1.600) + cross(2, 10, 1.600) + cross(18, 10, 1.600)} stroke="#6e9cb8" strokeWidth=".9" /></svg>
        </TaskSlot>
        <TaskSlot $open>
          <svg width="25" height="24" viewBox="0 0 25 24"><path d="M1 14C1 7 8 3 15 4c7 1 8 6 6 11-3 8-10 8-13 6-2-2 1-4-2-4s-5 0-5-3" fill="#cfe4f0" stroke="#8fb7cc" strokeWidth=".6" /><circle cx="5.500" cy="12" r="2" fill="#e2452f" /><circle cx="9" cy="8" r="2" fill="#54a94a" /><circle cx="14.500" cy="7" r="2" fill="#f2c437" /><circle cx="19" cy="12" r="1.800" fill="#3c72bf" /><circle cx="11" cy="17" r="2.200" fill="#2d5190" /><path d="m11 23 8-17 2 1-8 16z" fill="#dd8a36" /><path d="M18 7 20 1l4 2-3 6z" fill="#8e6a49" /></svg>
        </TaskSlot>
        <Tray>
          <TraySlot $w={28}>
            <svg width="25" height="24" viewBox="0 0 25 24"><path d="M14 1c7 2 9 8 7 14-3 6-11 8-17 4 8-1 13-9 10-18" fill="#f7a928" /><path d="M4 10c-5 0-5-5-1-5 0-5 7-6 8-1 4 0 4 6 0 6z" fill="#b9cff1" /><path d="M13 21c-3 0-4-4 0-5 1-5 8-4 8 0 4 0 4 5 0 5z" fill="#cfdff7" /></svg>
          </TraySlot>
          <TraySlot $w={43} $left>26°C</TraySlot>
          <Forecast>Partly cloudy</Forecast>
          <TraySlot $w={24}><Icon w={12} h={8} c="#fff" sw={1.300}><path d="m.5 7 5.500-6 5.500 6" /></Icon></TraySlot>
          <TraySlot $w={24}><Icon w={13} h={17} c="#fff"><rect x="1.500" y="4.500" width="7.500" height="8" rx="2" /><path d="m9 7.500 3-1.500v5.500L9 10M2 2c2-1.700 4.500-1.700 6.500 0M2 15c2 1.700 4.500 1.700 6.500 0" /></Icon></TraySlot>
          <TraySlot $w={24}><Icon w={16} h={13} c="#fff"><path d="M6 3.500h8.500v8H4.500V9M15.500 6v3M1 3h5v2.500c0 2-5 2-5 0zM2 .5V3M5 .5V3" /><path d="M6.500 5.500h5.500v4H6.500z" fill="#fff" stroke="none" /></Icon></TraySlot>
          <TraySlot $w={25}><Icon w={14} h={13} c="#fff"><path d="M.7 9.500C2 5 6.500 1.500 12.500.7M3.500 10.500c1.300-3.500 4.500-6 9-6.700M6.500 11.500c1-2.300 3-4 6-4.500" opacity=".85" /><path d="M9.500 12.500 13 9v3.500z" fill="#fff" /></Icon></TraySlot>
          <TraySlot $w={22}><Icon w={17} h={14} c="#fff"><path d="M.6 5v4.500h2.500L6.500 13V1.500L3.100 5zM9 4.500c1.300 1.700 1.300 3.800 0 5.500M11.500 2.500c2.300 3 2.300 6.500 0 9.500M14 .8c3 4 3 9 0 13" /></Icon></TraySlot>
          <TraySlot $w={33}><Icon w={17} h={15} c="#fff"><path d="M6 11 12 1.500c2-1.500 3.500 0 2.500 2L8 12.500l-2.500 1zM3 9c-3 1.500-3 5 0 5 2.500 0 3-2 5-2M9 6.500c1-1 3-1 5 2.500l2.500-1.500" /></Icon></TraySlot>
          <TraySlot $w={31}><Icon w={23} h={14} c="#fff" sw={1.100}><rect x=".5" y=".5" width="22" height="12.500" /><path d="M3 4h17M3 6.700h17" strokeDasharray="1.500 1.300" /><path d="M3 10h1.500M6 10h11M18.500 10H20" /></Icon></TraySlot>
          <Lang $w={37}>ENG</Lang>
          <Clock>7:22 PM<br />10/14/2023</Clock>
          <TraySlot $w={44}>
            <svg width="26" height="26" viewBox="0 1 26 26"><path d="M3 3h16v12H9l-4 4v-4H3z" fill="#fff" /><path d="M5.500 6.500h11M5.500 9h11M5.500 11.500h7" stroke="#1f2b47" /><circle cx="18" cy="20" r="7.800" fill="#2c3238" stroke="#8b9499" /><text x="15" y="24" fill="#fff" fontSize="11" fontWeight="600" fontFamily="Open Sans, sans-serif">3</text></svg>
          </TraySlot>
          <DesktopEdge />
        </Tray>
      </TaskBar>
    </Screen>
  );
}
